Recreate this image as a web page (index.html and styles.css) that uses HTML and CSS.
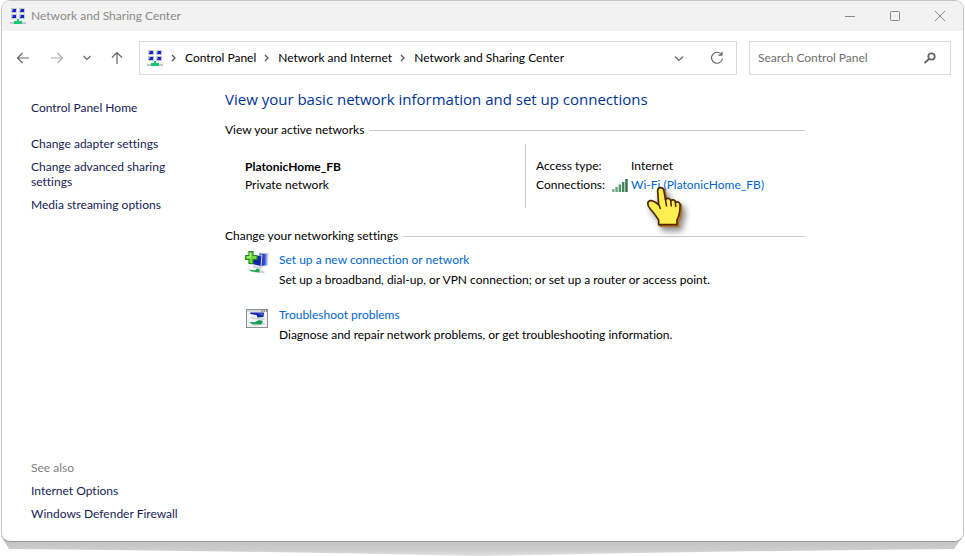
FILE: index.html
```html
<!DOCTYPE html>
<html lang="en">
<head>
<meta charset="utf-8">
<title>Network and Sharing Center</title>
<link rel="stylesheet" href="styles.css">
</head>
<body>
<svg class="defs" width="0" height="0" aria-hidden="true">
  <defs>
    <linearGradient id="screen" x1="0" y1="0" x2="1" y2="1"><stop offset="0" stop-color="#dfe9ff"/><stop offset=".35" stop-color="#2448d8"/><stop offset="1" stop-color="#0a1590"/></linearGradient>
    <linearGradient id="screen2" x1="0" y1="0" x2="1" y2="0"><stop offset="0" stop-color="#1420a0"/><stop offset=".6" stop-color="#3050d0"/><stop offset="1" stop-color="#c8d6f4"/></linearGradient>
    <linearGradient id="bar" x1="0" y1="0" x2="1" y2="0"><stop offset="0" stop-color="#83b99a"/><stop offset="1" stop-color="#2c7047"/></linearGradient>
    <linearGradient id="lift" x1="0" y1="0" x2="0" y2="1"><stop offset="0" stop-color="#bdbdbd"/><stop offset=".7" stop-color="#cdcdcd"/><stop offset="1" stop-color="#e2e2e2"/></linearGradient>
    <symbol id="net" viewBox="0 0 16 17">
      <path d="M1 0h6v5H1zM9 0h6v5H9zM1 6h6v5H1zM9 6h6v5H9z" fill="#c6c9ce"/>
      <path d="M2 1h4v3H2zM10 1h4v3h-4zM2 7h4v3H2zM10 7h4v3h-4z" fill="#1226c0"/>
      <path d="M2 1h1v2H2zM10 1h1v2h-1zM2 7h1v2H2zM10 7h1v2h-1z" fill="#7f92e6"/>
      <path d="M0 14h16v2H0z" fill="#c4c8c8"/>
      <path d="M7 11h2v2h3v3H4v-3h3z" fill="#12c878"/>
    </symbol>
    <symbol id="chev" viewBox="0 0 8 8"><path d="M2 1l3 3-3 3" fill="none" stroke="#555" stroke-width="1.300"/></symbol>
  </defs>
</svg>
<div class="window">
  <header class="titlebar">
    <svg class="net-icon" aria-hidden="true"><use href="#net"/></svg>
    <span class="title">Network and Sharing Center</span>
    <button class="caption" aria-label="Minimize"><svg viewBox="0 0 12 12"><path d="M1 6.500h10"/></svg></button>
    <button class="caption" aria-label="Maximize"><svg viewBox="0 0 12 12"><rect x="1.500" y="1.500" width="9" height="9" rx="1"/></svg></button>
    <button class="caption" aria-label="Close"><svg viewBox="0 0 12 12"><path d="M1 1l10 10M11 1L1 11"/></svg></button>
  </header>

  <div class="toolbar">
    <nav class="history">
      <button aria-label="Back"><svg viewBox="0 0 14 14"><path d="M13 7H1.500M6.500 2l-5 5 5 5"/></svg></button>
      <button class="dim" aria-label="Forward"><svg viewBox="0 0 14 14"><path d="M1 7h11.500M7.500 2l5 5-5 5"/></svg></button>
      <button class="narrow" aria-label="Recent locations"><svg viewBox="0 0 14 14"><path d="M3.500 5L7 8.500 10.500 5"/></svg></button>
      <button aria-label="Up"><svg viewBox="0 0 14 14"><path d="M7 13V1.500M2 6.500l5-5 5 5"/></svg></button>
    </nav>
    <div class="address">
      <svg class="net-icon" aria-hidden="true"><use href="#net"/></svg>
      <svg class="chev" aria-hidden="true"><use href="#chev"/></svg>
      <a href="#">Control Panel</a>
      <svg class="chev" aria-hidden="true"><use href="#chev"/></svg>
      <a href="#">Network and Internet</a>
      <svg class="chev" aria-hidden="true"><use href="#chev"/></svg>
      <a href="#">Network and Sharing Center</a>
      <span class="address-tools">
        <button aria-label="Previous locations"><svg viewBox="0 0 14 14"><path d="M3 5.500l4 4 4-4"/></svg></button>
        <button aria-label="Refresh"><svg viewBox="0 0 14 14"><path d="M11.500 3.500A5.500 5.500 0 1 0 12.500 7.500M12 .8v3.400H8.500"/></svg></button>
      </span>
    </div>
    <form class="search">
      <input type="text" aria-label="Search Control Panel" placeholder="Search Control Panel">
      <button type="button" aria-label="Search"><svg viewBox="0 0 14 14"><circle cx="8.500" cy="5.500" r="3.200"/><path d="M6 8l-4.500 4"/></svg></button>
    </form>
  </div>

  <div class="content">
    <aside class="sidebar">
      <a class="home" href="#">Control Panel Home</a>
      <a href="#">Change adapter settings</a>
      <a href="#">Change advanced sharing settings</a>
      <a href="#">Media streaming options</a>
      <div class="see-also">
        <span>See also</span>
        <a href="#">Internet Options</a>
        <a href="#">Windows Defender Firewall</a>
      </div>
    </aside>
    <main>
      <h1>View your basic network information and set up connections</h1>
      <h2>View your active networks</h2>
      <section class="network">
        <div class="identity">
          <strong>PlatonicHome_FB</strong>
          <span>Private network</span>
        </div>
        <dl>
          <dt>Access type:</dt><dd>Internet</dd>
          <dt>Connections:</dt>
          <dd class="connection">
            <svg class="signal" viewBox="0 0 16 13" aria-hidden="true"><path d="M0 10h2.500v3H0zM3.300 8h2.500v5H3.300zM6.600 5.500h2.500V13H6.600zM9.900 3h2.500v10H9.900zM13.200 0h2.500v13h-2.500z" fill="url(#bar)"/></svg>
            <a href="#">Wi-Fi (PlatonicHome_FB)</a>
            <svg class="pointer" viewBox="0 0 38 44" aria-hidden="true">
              <path d="M11 4.500c0-4 5.500-4 6 0l1.500 8.500c2-2 4.500-1 5 1 2-1.500 4.500-.5 4.500 1.500 2.500-1 4.500.5 4.500 3 0 7-.5 10-3 14V37H12v-4.500C10 30 8 26 4 22c-3.500-4-3-7.500 0-8 3-.5 5.500 2 8 4z" fill="#d98a28" stroke="#b86f20" stroke-width="1.500" transform="translate(1.500 1.500)"/>
              <path d="M11 4.500c0-4 5.500-4 6 0l1.500 8.500c2-2 4.500-1 5 1 2-1.500 4.500-.5 4.500 1.500 2.500-1 4.500.5 4.500 3 0 7-.5 10-3 14V37H12v-4.500C10 30 8 26 4 22c-3.500-4-3-7.500 0-8 3-.5 5.500 2 8 4z" fill="#ffee50" stroke="#4a2800" stroke-width="1.600" stroke-linejoin="round"/>
              <path d="M18.500 13l1 6M23.500 14l.5 5M28 15.500l.3 4M12.500 18.500l1 3" fill="none" stroke="#4a2800" stroke-width="1.500" stroke-linecap="round"/>
            </svg>
          </dd>
        </dl>
      </section>
      <h2 class="settings">Change your networking settings</h2>
      <ul class="tasks">
        <li>
          <svg viewBox="0 0 24 24" aria-hidden="true">
            <path d="M14 2l9 .5-1 12-7 1z" fill="url(#screen2)" stroke="#c2cbe0"/>
            <path d="M5 5l12-1-1 11.500L5 13z" fill="url(#screen)" stroke="#d4dbe8"/>
            <path d="M8 7l7-2.500L14 14l-8-2z" fill="#1422a8"/>
            <path d="M8 15l8 1 1 2-9-1z" fill="#c9cfd6"/>
            <path d="M1 18l17 1.500 2 3L8 21z" fill="#cbd0d2"/>
            <path d="M4 19l6 .5 2-2 3 1-1 3-7-1z" fill="#18a850"/>
            <path d="M4 .7h4V4.500h4v4H8v4H4v-4H.7v-4H4z" fill="#72d83c" stroke="#24891c" stroke-width="1.200"/>
            <path d="M5.300 2v4H2" fill="none" stroke="#b6f58b" stroke-width="1.200"/>
          </svg>
          <div><a href="#">Set up a new connection or network</a><p>Set up a broadband, dial-up, or VPN connection; or set up a router or access point.</p></div>
        </li>
        <li>
          <svg viewBox="0 0 24 24" aria-hidden="true">
            <rect x="1.500" y="3.500" width="21" height="18" fill="#f3f5f8" stroke="#8c8f94"/>
            <path d="M2 4h20v2H2z" fill="#d6d9df"/>
            <path d="M16 5h1.500M18.500 5H20M21 5h1" stroke="#555"/>
            <path d="M5 6.500h14l-.5 4.500-6 .5-1-2.500-6-1z" fill="#1524a4"/>
            <path d="M12 7.500l6.500-.5-.5 3z" fill="#3655c8"/>
            <path d="M4 11l15 1.500 1 1.500-11-1z" fill="#c4cad2"/>
            <path d="M3 16l14 .5 4 1.500-12 2z" fill="#c2c9ca"/>
            <path d="M5 16l5 .3 4-2.300 4 1-2 3.500-9-.5z" fill="#12a14c"/>
          </svg>
          <div><a href="#">Troubleshoot problems</a><p>Diagnose and repair network problems, or get troubleshooting information.</p></div>
        </li>
      </ul>
    </main>
  </div>
</div>
<svg class="lift" viewBox="0 0 965 20" preserveAspectRatio="none" aria-hidden="true"><path d="M1 0L9 13Q250 15 480 20 720 15 954 13L963 0z" fill="url(#lift)"/></svg>
</body>
</html>
```
FILE: styles.css
```css
* { box-sizing: border-box; }
body {
  margin: 0;
  min-height: 100vh;
  display: flex;
  flex-direction: column;
  position: relative;
  background: #fff;
  color: #000;
  font: 12px/16px Lato, "Open Sans", sans-serif;
  font-variant-ligatures: none;
}
a { color: #0066cc; text-decoration: none; }
button {
  display: grid;
  place-items: center;
  padding: 0;
  border: 0;
  background: none;
}
button svg { width: 14px; height: 14px; fill: none; stroke: #666; stroke-width: 1.2; }
.defs { position: absolute; }
.net-icon { width: 16px; height: 17px; flex: none; }
.window {
  flex: 1;
  display: flex;
  flex-direction: column;
  margin: 0 1px 14px;
  border: 1px solid #c4c4c4;
  border-bottom-color: #999;
  border-radius: 9px;
  background: #fff;
  overflow: hidden;
  position: relative;
  z-index: 1;
}
.lift { position: absolute; left: 0; bottom: 0; width: 100%; height: 20px; }

.titlebar { display: flex; align-items: center; height: 30px; padding: 0 1px 0 8px; background: #f2f2f2; }
.title { flex: 1; margin-left: 5px; color: #8a8a8a; }
.caption { width: 45px; height: 30px; }
.caption svg { width: 12px; height: 12px; stroke: #888; stroke-width: 1; }

.toolbar { display: flex; padding: 10px 12px 10px 0; }
.history { display: flex; width: 137px; padding-left: 4px; align-items: center; }
.history button { width: 34px; height: 34px; }
.history .narrow { width: 26px; }
.history .dim svg { stroke: #aaa; }
.address {
  flex: 1;
  display: flex;
  align-items: center;
  height: 34px;
  padding: 0 7px;
  border: 1px solid #d9d9d9;
}
.address a { color: #000; }
.chev { width: 8px; height: 8px; margin: 0 7px; }
.address-tools { display: flex; gap: 14px; margin-left: auto; }
.address-tools button { width: 24px; height: 24px; }
.search { display: flex; align-items: center; width: 202px; height: 34px; margin-left: 12px; padding: 0 8px; border: 1px solid #d9d9d9; }
.search input { flex: 1; min-width: 0; padding: 0; border: 0; outline: 0; background: none; font: inherit; }
.search input::placeholder { color: #6d6d6d; opacity: 1; }
.search button { width: 24px; height: 24px; }
.search svg { stroke-width: 1.800; }

.content { flex: 1; display: flex; }
.sidebar { display: flex; flex-direction: column; gap: 8px; width: 223px; padding: 15px 48px 20px 29px; line-height: 15px; }
.sidebar a { color: #151c55; }
.sidebar .home { margin-bottom: 13px; }
.see-also { display: flex; flex-direction: column; gap: 8px; margin-top: auto; margin-right: -40px; color: #808080; }

main { flex: 1; max-width: 580px; padding-top: 3px; }
h1 { margin: 0 0 12px; color: #003399; font: 400 15px/22px "Open Sans", sans-serif; white-space: nowrap; }
h2 { display: flex; align-items: center; gap: 5px; margin: 0; font-size: 12px; line-height: 16px; font-weight: 400; }
h2::after { content: ""; flex: 1; height: 1px; background: #c8c8c8; }
.network { display: flex; height: 64px; margin-top: 6px; line-height: 18px; }
.identity { display: flex; flex-direction: column; width: 301px; padding: 14px 0 0 20px; border-right: 1px solid #c8c8c8; }
dl { display: grid; grid-template-columns: 95px auto; align-content: start; margin: 0; padding: 13px 0 0 10px; row-gap: 1px; }
dd { margin: 0; }
.connection { position: relative; white-space: nowrap; }
.signal { position: absolute; left: -19px; top: 3px; width: 16px; height: 13px; }
.pointer { position: absolute; left: 15px; top: 10px; width: 40px; height: 46px; filter: drop-shadow(3px 4px 3px #0007); }
.settings { margin-top: 20px; }
.tasks { display: flex; flex-direction: column; gap: 15px; margin: 6px 0 0; padding: 0 0 0 20px; list-style: none; line-height: 20px; }
.tasks li { display: flex; gap: 10px; }
.tasks svg { flex: none; width: 24px; height: 24px; margin-top: 1px; }
.tasks p { margin: 0; white-space: nowrap; }
```
